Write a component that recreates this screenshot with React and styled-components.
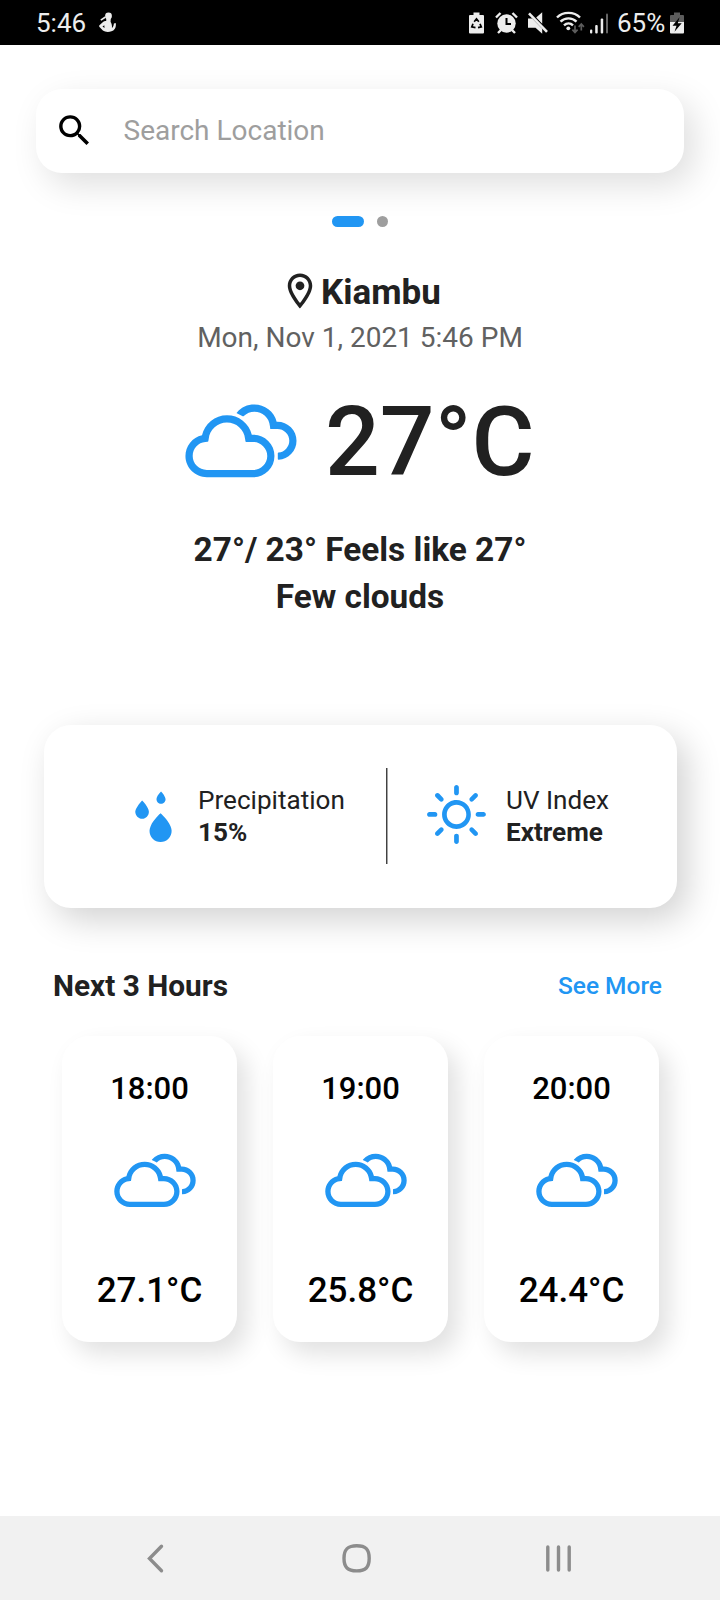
import React from "react";
import styled, { createGlobalStyle } from "styled-components";
import { WiCloudy, WiRaindrops, WiDaySunny } from "react-icons/wi";
import { MdSearch, MdOutlineLocationOn } from "react-icons/md";

const BLUE = "#2196f3";
const INK = "#212121";

const GlobalStyle = createGlobalStyle`
  * { box-sizing: border-box; }
  body {
    margin: 0;
    background: #fff;
    font-family: Roboto, "Liberation Sans", sans-serif;
    color: ${INK};
  }
  svg { display: block; flex: none; }
`;

const Screen = styled.div`
  width: 720px;
  height: 1600px;
  display: flex;
  flex-direction: column;
  background: #fff;
  overflow: hidden;
`;

const StatusBar = styled.header`
  height: 45px;
  flex: none;
  display: flex;
  align-items: center;
  padding: 0 36px;
  background: #000;
  color: #ededed;
  font-size: 26px;
  line-height: 45px;
`;

const StatusGlyph = styled.svg`
  height: 24px;
  width: ${(p) => p.$w}px;
  margin-left: ${(p) => p.$gap || 0}px;
`;

const StatusGroup = styled.div`
  display: flex;
  align-items: center;
  margin-left: auto;
`;

const StatusText = styled.span`
  padding-top: 1px;
  width: 50px;
  margin-left: ${(p) => p.$gap || 0}px;
`;

const Content = styled.main`
  flex: 1;
  display: flex;
  flex-direction: column;
`;

const SearchBar = styled.label`
  height: 84px;
  margin: 44px 36px 0;
  padding: 0 0 1px 17.5px;
  display: flex;
  align-items: center;
  border-radius: 26px;
  background: #fff;
  box-shadow: 10px 12px 34px rgba(0, 0, 0, 0.13);
`;

const SearchText = styled.span`
  margin-left: 29px;
  padding-bottom: 1px;
  font-size: 28px;
  color: #9e9e9e;
`;

const Pager = styled.div`
  display: flex;
  justify-content: center;
  gap: 13px;
  margin-top: 43px;
`;

const PagerDot = styled.span`
  width: ${(p) => (p.$active ? 32 : 11)}px;
  height: 11px;
  border-radius: 6px;
  background: ${(p) => (p.$active ? BLUE : "#9e9e9e")};
`;

const Place = styled.div`
  display: flex;
  justify-content: center;
  align-items: center;
  height: 44px;
  margin-top: 43px;
  font-size: 35px;
  font-weight: 700;
  line-height: 44px;

  svg { margin-bottom: 2px; }
`;

const PlaceName = styled.span`
  padding-top: 2px;
`;

const DateLine = styled.div`
  margin-top: 7px;
  font-size: 28px;
  line-height: 34px;
  text-align: center;
  color: #616161;
`;

const Current = styled.div`
  display: flex;
  align-items: center;
  height: 112px;
  margin-top: 31px;
  padding-left: 166px;

  svg { margin-top: 1px; }
`;

const Temperature = styled.span`
  margin-left: 9px;
  font-size: 96.5px;
  font-weight: 500;
  line-height: 112px;
`;

const Summary = styled.div`
  margin-top: 29px;
  font-size: 33.4px;
  font-weight: 700;
  line-height: 46.7px;
  text-align: center;
`;

const InfoCard = styled.section`
  height: 183px;
  margin: 105px 43px 0 44px;
  padding-bottom: 2px;
  display: flex;
  align-items: center;
  border-radius: 27px;
  background: #fff;
  box-shadow: 10px 12px 34px rgba(0, 0, 0, 0.18);
`;

const Divider = styled.span`
  width: 2px;
  height: 96px;
  background: linear-gradient(90deg, #424242 50%, #a5a5a5 50%);
`;

const Metric = styled.div`
  display: flex;
  align-items: center;
  width: ${(p) => p.$w}px;
  padding-left: ${(p) => p.$pad}px;

  svg { margin-top: ${(p) => p.$drop || 0}px; }
`;

const MetricText = styled.div`
  display: flex;
  flex-direction: column;
  margin-left: ${(p) => p.$gap}px;
  font-size: 26.1px;
  line-height: 32px;
`;

const MetricValue = styled.strong`
  font-weight: 700;
`;

const HoursHeader = styled.div`
  display: flex;
  align-items: center;
  justify-content: space-between;
  height: 40px;
  margin-top: 57px;
  padding: 0 58px 0 53px;
`;

const HoursTitle = styled.h2`
  margin: 0;
  font-size: 29.8px;
  font-weight: 700;
`;

const SeeMore = styled.a`
  padding-top: 1px;
  font-size: 24.5px;
  font-weight: 500;
  color: ${BLUE};
`;

const Hours = styled.div`
  display: flex;
  gap: 36px;
  margin-top: 31px;
  padding-left: 62px;
`;

const HourCard = styled.article`
  width: 175px;
  height: 306px;
  padding-top: 35px;
  display: flex;
  flex-direction: column;
  align-items: center;
  border-radius: 27px;
  background: #fff;
  color: #000;
  font-weight: 500;
  box-shadow: 10px 12px 24px rgba(0, 0, 0, 0.12);

  svg { margin: 20px 0 0 11px; }
`;

const HourTime = styled.span`
  font-size: 31px;
  line-height: 36px;
`;

const HourTemp = styled.span`
  margin-top: 34px;
  font-size: 35px;
  line-height: 40px;
`;

const NavBar = styled.nav`
  height: 84px;
  flex: none;
  display: flex;
  align-items: center;
  background: #f1f1f1;
`;

const NavGlyph = styled.svg`
  width: 32px;
  height: 32px;
  margin-left: ${(p) => p.$gap}px;
  fill: none;
  stroke: #8c8c8c;
  stroke-width: 3.4;
  stroke-linecap: round;
`;

const hours = [
  { time: "18:00", temp: "27.1°C" },
  { time: "19:00", temp: "25.8°C" },
  { time: "20:00", temp: "24.4°C" },
];

function Status() {
  return (
    <StatusBar>
      <StatusText>5:46</StatusText>
      <StatusGlyph $w={18} $gap={13} viewBox="0 0 18 24" fill="#ededed">
        <circle cx="9.5" cy="5" r="3.4" />
        <path d="M7.3 7h4.5l-.2 4c1.200 1.600 1.600 4 1.300 6 1.300-.6 1.700-2.400 2-4.400l1.800-.5c.8 4-1 7-4.200 8.200-3 1-6.500.8-8.600-.8L.5 16c-.6-.7-.5-1.400.2-2l3.600-3.300c.8-.7 2-.9 2.900-.6z" />
        <path d="M1.800 9.200 6.500 6" stroke="#ededed" strokeWidth="1.600" />
        <path d="m3.500 15.500 2 1.500-.2-2.800z" fill="#000" />
      </StatusGlyph>
      <StatusGroup>
        <StatusGlyph $w={15} viewBox="0 0 15 24" fill="#ededed">
          <path d="M4.500 1.500h6V4H14a1 1 0 0 1 1 1v16.500a1 1 0 0 1-1 1H1a1 1 0 0 1-1-1V5a1 1 0 0 1 1-1h3.500z" />
          <path d="m5.200 10.800 2.300-3 2.300 3M11 12.800l1.300 3-3.300.8M6.500 16.600l-3.700-.7L4 12.800" fill="none" stroke="#000" strokeWidth="1.700" />
        </StatusGlyph>
        <StatusGlyph $w={23} $gap={11} viewBox="0 0 23 24" fill="#ededed">
          <circle cx="11.500" cy="12.500" r="9.200" />
          <path d="M1 6.500 5.500 2M22 6.500 17.500 2M6 19l-3 3M17 19l3 3" stroke="#ededed" strokeWidth="2.400" />
          <path d="M11.500 7v6h4.500" fill="none" stroke="#000" strokeWidth="2" />
        </StatusGlyph>
        <StatusGlyph $w={20} $gap={10} viewBox="0 0 20 24" fill="#ededed">
          <path d="M0 7.600h4.200L14.200 17.700v5L7.500 16.800H0zM14.200 1.200v11.500L8.200 6.600z" />
          <path d="m1 2.300 18 18.500" stroke="#ededed" strokeWidth="2.600" />
        </StatusGlyph>
        <StatusGlyph $w={29} $gap={8} viewBox="0 0 29 24" fill="none" stroke="#ededed" strokeWidth="2.400">
          <path d="M1 6.500c6-6.200 17-6.200 23 0M4.500 10.700c4.500-4.400 11.500-4.400 16 0M8 14.300c2.700-2.500 6.500-2.500 9 0" />
          <circle cx="12.300" cy="17.300" r="1.900" fill="#ededed" stroke="none" />
          <path d="M19 14.500v7m-2.600-2.800L19 21.500l2.600-2.800M25.300 19.500v-6.500m-2.600 2.800 2.600-2.800 2.600 2.800" stroke="#5c5c5c" strokeWidth="1.700" />
        </StatusGlyph>
        <StatusGlyph $w={18} $gap={5} viewBox="0 0 18 24" fill="#ededed">
          <rect x="0" y="18.500" width="2.300" height="4" rx="1" />
          <rect x="5.200" y="14" width="2.500" height="8.500" rx="1" />
          <rect x="10.700" y="7.500" width="2.500" height="15" rx="1" />
          <rect x="16" y="2.500" width="2" height="20" rx="1" fill="#666" />
        </StatusGlyph>
        <StatusText $gap={9}>65%</StatusText>
        <StatusGlyph $w={14} $gap={3} viewBox="0 0 14 24">
          <path d="M4 1.500h6V4h3a1 1 0 0 1 1 1v6H0V5a1 1 0 0 1 1-1h3z" fill="#5c5c5c" />
          <path d="M0 11h14v10.500a1 1 0 0 1-1 1H1a1 1 0 0 1-1-1z" fill="#ededed" />
          <path d="M9.500 6.200 2.500 14.700h4l-2 6 7.200-8.500H7.800z" fill="#000" />
        </StatusGlyph>
      </StatusGroup>
    </StatusBar>
  );
}

export default function App() {
  return (
    <Screen>
      <GlobalStyle />
      <Status />
      <Content>
        <SearchBar>
          <MdSearch size={41} color="#000" />
          <SearchText>Search Location</SearchText>
        </SearchBar>
        <Pager>
          <PagerDot $active />
          <PagerDot />
        </Pager>
        <Place>
          <MdOutlineLocationOn size={42} />
          <PlaceName>Kiambu</PlaceName>
        </Place>
        <DateLine>Mon, Nov 1, 2021 5:46 PM</DateLine>
        <Current>
          <WiCloudy size={150} color={BLUE} />
          <Temperature>27°C</Temperature>
        </Current>
        <Summary>
          <div>27°/ 23° Feels like 27°</div>
          <div>Few clouds</div>
        </Summary>
        <InfoCard>
          <Metric $w={342} $pad={41} $drop={17}>
            <WiRaindrops size={137} color={BLUE} />
            <MetricText $gap={-24}>
              <span>Precipitation</span>
              <MetricValue>15%</MetricValue>
            </MetricText>
          </Metric>
          <Divider />
          <Metric $w={280} $pad={26.5}>
            <WiDaySunny size={83} color={BLUE} />
            <MetricText $gap={8.5}>
              <span>UV Index</span>
              <MetricValue>Extreme</MetricValue>
            </MetricText>
          </Metric>
        </InfoCard>
        <HoursHeader>
          <HoursTitle>Next 3 Hours</HoursTitle>
          <SeeMore>See More</SeeMore>
        </HoursHeader>
        <Hours>
          {hours.map((h) => (
            <HourCard key={h.time}>
              <HourTime>{h.time}</HourTime>
              <WiCloudy size={110} color={BLUE} />
              <HourTemp>{h.temp}</HourTemp>
            </HourCard>
          ))}
        </Hours>
      </Content>
      <NavBar>
        <NavGlyph $gap={140} viewBox="0 0 32 32">
          <path d="M21.500 4.200 9.500 16.500 21.500 28.700" />
        </NavGlyph>
        <NavGlyph $gap={169} viewBox="0 0 32 32">
          <path d="M15.700 3.700c9 0 12.500 3.500 12.500 12.600s-3.500 12.600-12.500 12.600S3 25.400 3 16.300 6.700 3.700 15.700 3.700z" />
        </NavGlyph>
        <NavGlyph $gap={170} viewBox="0 0 32 32">
          <path d="M4.800 5v23M15.500 5v23M26.200 5v23" />
        </NavGlyph>
      </NavBar>
    </Screen>
  );
}
